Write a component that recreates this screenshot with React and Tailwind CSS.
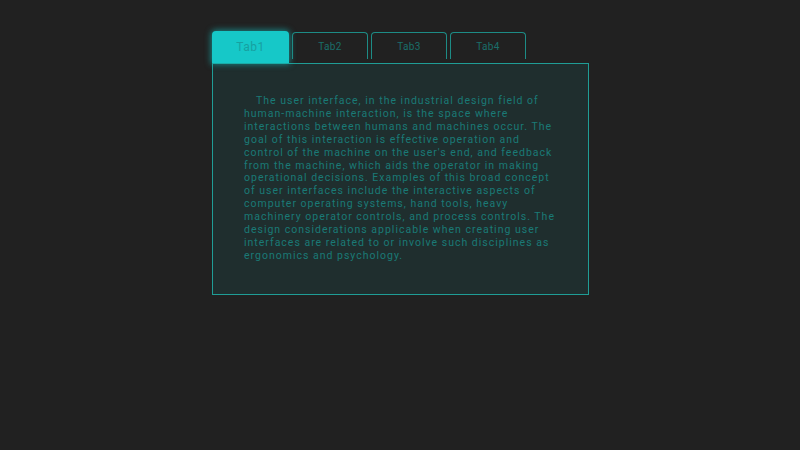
import { useState } from "react";

const tabs = ["Tab1", "Tab2", "Tab3", "Tab4"];

const text =
	"The user interface, in the industrial design field of human-machine interaction, is the space where interactions between humans and machines occur. The goal of this interaction is effective operation and control of the machine on the user's end, and feedback from the machine, which aids the operator in making operational decisions. Examples of this broad concept of user interfaces include the interactive aspects of computer operating systems, hand tools, heavy machinery operator controls, and process controls. The design considerations applicable when creating user interfaces are related to or involve such disciplines as ergonomics and psychology.";

const App = () => {
	const [active, setActive] = useState(0);

	return (
		<div className="w-full h-[450px] bg-[#212121] pt-[31px] pl-[212px]" style={{ fontFamily: "Roboto, 'Liberation Sans', sans-serif" }}>
			<div className="flex items-start gap-[3px]">
				{tabs.map((t, i) =>
					i === active ? (
						<button
							key={t}
							onClick={() => setActive(i)}
							className="w-[77px] h-[32px] rounded-t-[4px] bg-[#16c8c8] text-[#17a0a0] text-[12px] tracking-[0.04em] shadow-[0_0_6px_1px_rgba(22,200,200,0.6)]"
						>
							{t}
						</button>
					) : (
						<button
							key={t}
							onClick={() => setActive(i)}
							className="w-[76px] h-[27px] mt-[1px] rounded-t-[4px] border border-b-0 border-[#1d8c86] text-[#1a6e6a] text-[10px] tracking-[0.04em]"
						>
							{t}
						</button>
					)
				)}
			</div>
			<div className="w-[377px] h-[232px] border border-[#1f9d96] bg-[#1f2e2e] pt-[31px] pl-[31px]">
				<p className="w-[316px] indent-[12px] text-[10.5px] leading-[12.9px] tracking-[1px] text-[#1a7a76]">
					{text}
				</p>
			</div>
		</div>
	);
};

export default App;
